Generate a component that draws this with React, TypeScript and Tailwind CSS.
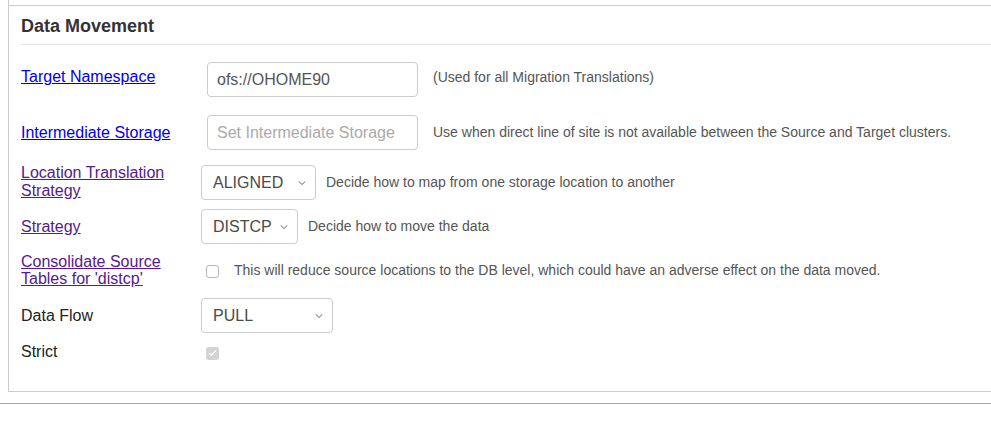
import React from "react";

const font = { fontFamily: '"Liberation Sans", Arial, sans-serif' };

function Chevron() {
  return (
    <svg width="8" height="5" viewBox="0 0 8 5" className="pointer-events-none absolute right-[10px] top-1/2 -translate-y-1/2">
      <path d="M0.7 0.8 L4 4 L7.3 0.8" fill="none" stroke="#666" strokeWidth="1" />
    </svg>
  );
}

function Select({ value, width }: { value: string; width: string }) {
  return (
    <div className={`relative h-[35px] ${width}`}>
      <select
        defaultValue={value}
        className="h-full w-full appearance-none rounded-[4px] border border-[#ccc] bg-white pl-[11px] text-[16px] text-[#4a4a4a] outline-none"
      >
        <option>{value}</option>
      </select>
      <Chevron />
    </div>
  );
}

function Help({ children, ml }: { children: React.ReactNode; ml: string }) {
  return <span className={`${ml} text-[14px] text-[#555]`}>{children}</span>;
}

export default function App() {
  return (
    <div className="h-[421px] w-full overflow-hidden bg-white" style={font}>
      <div className="ml-[8px] border-b border-l border-[#ccc] pt-[5px]">
        <div className="border-t border-[#ccc] pl-[12px] pb-[26px]">
          {/* heading */}
          <div className="border-b border-[#e2e2e2] pt-[10px] pb-[8px]">
            <h2 className="text-[18px] leading-[20px] font-bold text-[#333]">Data Movement</h2>
          </div>

          {/* Target Namespace */}
          <div className="mt-[17px] flex h-[35px] items-center">
            <a href="#" className="w-[180px] pb-[5px] text-[16px] text-[#0000ee] underline">Target Namespace</a>
            <input
              defaultValue="ofs://OHOME90"
              className="ml-[6px] h-[35px] w-[211px] rounded-[4px] border border-[#ccc] px-[9px] text-[16px] text-[#555] outline-none"
            />
            <span className="pb-[5px]">
              <Help ml="ml-[15px]">(Used for all Migration Translations)</Help>
            </span>
          </div>

          {/* Intermediate Storage */}
          <div className="mt-[18px] flex h-[35px] items-center">
            <a href="#" className="w-[180px] text-[16px] text-[#0000ee] underline">Intermediate Storage</a>
            <input
              placeholder="Set Intermediate Storage"
              className="ml-[6px] h-[35px] w-[211px] rounded-[4px] border border-[#ccc] px-[9px] text-[16px] text-[#555] outline-none placeholder:text-[#aaa]"
            />
            <Help ml="ml-[15px]">Use when direct line of site is not available between the Source and Target clusters.</Help>
          </div>

          {/* Location Translation Strategy */}
          <div className="mt-[15px] flex h-[35px] items-center">
            <a href="#" className="w-[180px] pb-[2px] text-[16px] leading-[18px] text-[#551a8b] underline">
              Location Translation
              <br />
              Strategy
            </a>
            <Select value="ALIGNED" width="w-[115px]" />
            <Help ml="ml-[10px]">Decide how to map from one storage location to another</Help>
          </div>

          {/* Strategy */}
          <div className="mt-[9px] flex h-[35px] items-center">
            <a href="#" className="w-[180px] text-[16px] text-[#551a8b] underline">Strategy</a>
            <Select value="DISTCP" width="w-[97px]" />
            <Help ml="ml-[10px]">Decide how to move the data</Help>
          </div>

          {/* Consolidate */}
          <div className="mt-[8px] flex h-[36px] items-center">
            <a href="#" className="w-[180px] text-[16px] leading-[17px] text-[#551a8b] underline">
              Consolidate Source
              <br />
              Tables for 'distcp'
            </a>
            <span className="ml-[5px] mt-[2px] h-[13px] w-[13px] rounded-[3px] border border-[#b5b5b5] bg-white" />
            <Help ml="ml-[15px]">This will reduce source locations to the DB level, which could have an adverse effect on the data moved.</Help>
          </div>

          {/* Data Flow */}
          <div className="mt-[10px] flex h-[35px] items-center">
            <span className="w-[180px] text-[16px] text-[#222]">Data Flow</span>
            <Select value="PULL" width="w-[132px]" />
          </div>

          {/* Strict */}
          <div className="mt-[6px] flex h-[26px] items-center">
            <span className="w-[180px] text-[16px] text-[#222]">Strict</span>
            <span className="ml-[5px] mt-[2px] flex h-[13px] w-[13px] items-center justify-center rounded-[3px] bg-[#d3d3d3]">
              <svg width="9" height="8" viewBox="0 0 9 8">
                <path d="M1.2 4.2 L3.5 6.3 L7.8 1.5" fill="none" stroke="#fff" strokeWidth="1.5" />
              </svg>
            </span>
          </div>
        </div>
      </div>
      <div className="mt-[11px] h-px w-full bg-[#aaa]" />
    </div>
  );
}
